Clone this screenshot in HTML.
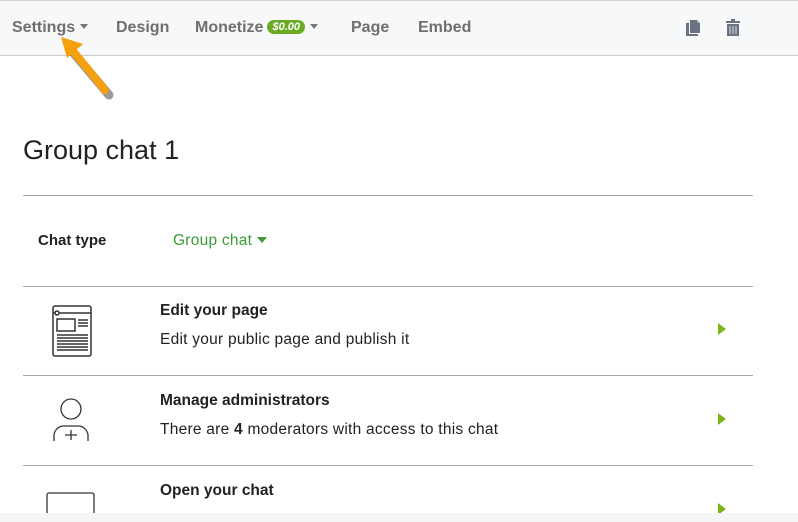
<!DOCTYPE html>
<html><head><style>
body{margin:0;width:798px;height:522px;overflow:hidden;background:#fff;font-family:"Liberation Sans",sans-serif;position:relative}
.nav{position:absolute;left:0;top:0;width:798px;height:54px;background:#f7f8fa;border-top:1px solid #d0d0d0;border-bottom:1px solid #ccc}
.nav span{position:absolute;top:18px;font-size:16px;font-weight:bold;color:#6f6f6f}
.car{display:inline-block;width:0;height:0;border-left:4px solid transparent;border-right:4px solid transparent;border-top:5px solid #777;vertical-align:3px;margin-left:5px}
.badge{display:inline-block;background:#6aab22;color:#fff;font-size:11px;font-weight:bold;border-radius:8px;padding:1px 5px;vertical-align:2px;margin-left:4px}
.t{position:absolute;color:#222}
.hr{position:absolute;left:23px;width:730px;height:1px;background:#a8a8a8}
.play{position:absolute;left:718px;width:0;height:0;border-top:6px solid transparent;border-bottom:6px solid transparent;border-left:8px solid #7cb518}
.s{font-size:15.5px;letter-spacing:0.25px}
</style></head><body>
<div class="nav">
<span style="left:12px">Settings<i class="car"></i></span>
<span style="left:116px">Design</span>
<span style="left:195px">Monetize<i class="badge">$0.00</i><i class="car"></i></span>
<span style="left:351px">Page</span>
<span style="left:418px">Embed</span>
<svg style="position:absolute;left:685px;top:18px" width="16" height="18" viewBox="0 0 16 18"><path d="M1 4h3v11h9v2H1z" fill="#6b7380"/><path d="M5 1h7l3 3v10H5z" fill="#6b7380"/><path d="M12 1v3h3" fill="#9aa"/></svg>
<svg style="position:absolute;left:725px;top:18px" width="16" height="18" viewBox="0 0 16 18"><rect x="1" y="2" width="14" height="2" fill="#6b7380"/><rect x="6" y="0" width="4" height="2" fill="#6b7380"/><path d="M2 5h12v12H2z" fill="#6b7380"/><path d="M5 7v8M8 7v8M11 7v8" stroke="#b8bcc4" stroke-width="1.5"/></svg>
</div>
<svg style="position:absolute;left:55px;top:35px" width="65" height="70"><path d="M52 57L14 12" stroke="#222" stroke-opacity=".45" stroke-width="9" stroke-linecap="round" transform="translate(2,3)"/><path d="M50 55L13 10" stroke="#f5a00f" stroke-width="8" stroke-linecap="round"/><path d="M6 2L28 9L12 23Z" fill="#f5a00f"/></svg>
<div class="t" style="left:23px;top:135px;font-size:27px">Group chat 1</div>
<div class="hr" style="top:195px"></div>
<div class="t" style="left:38px;top:232px;font-size:15px;font-weight:bold">Chat type</div>
<div class="t s" style="left:173px;top:232px;color:#3a9c3a">Group chat <i style="display:inline-block;border-left:5px solid transparent;border-right:5px solid transparent;border-top:6px solid #3a9c3a;vertical-align:2px"></i></div>
<div class="hr" style="top:286px"></div>
<div class="hr" style="top:375px"></div>
<div class="hr" style="top:465px"></div>
<svg style="position:absolute;left:51px;top:304px" width="42" height="54" viewBox="0 0 42 54" fill="none" stroke="#333" stroke-width="1.5"><rect x="2" y="2" width="38" height="50" rx="2"/><path d="M2 9h38"/><circle cx="6" cy="9" r="2" fill="#fff"/><rect x="6" y="15" width="18" height="12"/><path d="M27 16h10M27 19h10M27 22h10M6 31h31M6 34h31M6 37h31M6 40h31M6 43h31M6 46h31"/></svg>
<svg style="position:absolute;left:52px;top:397px" width="38" height="46" viewBox="0 0 38 46" fill="none" stroke="#333" stroke-width="1.3"><circle cx="19" cy="12" r="10"/><path d="M2 44v-6a10 10 0 0 1 10-9h14a10 10 0 0 1 10 9v6M19 33v10M13 38h12"/></svg>
<svg style="position:absolute;left:46px;top:492px" width="50" height="30"><rect x="1" y="1" width="47" height="40" rx="2" fill="none" stroke="#333" stroke-width="1.3"/></svg>
<div class="t s" style="left:160px;top:302px;font-weight:bold;letter-spacing:0">Edit your page</div>
<div class="t s" style="left:160px;top:331px">Edit your public page and publish it</div>
<div class="t s" style="left:160px;top:392px;font-weight:bold;letter-spacing:0">Manage administrators</div>
<div class="t s" style="left:160px;top:421px">There are <b>4</b> moderators with access to this chat</div>
<div class="t s" style="left:160px;top:482px;font-weight:bold;letter-spacing:0">Open your chat</div>
<div class="play" style="top:323px"></div>
<div class="play" style="top:413px"></div>
<div class="play" style="top:503px"></div>
<div style="position:absolute;left:0;top:513px;width:798px;height:9px;background:#f4f5f7"></div>
</body></html>
